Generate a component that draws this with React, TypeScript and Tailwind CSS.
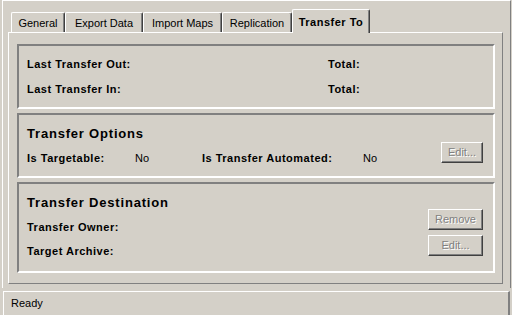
import React from 'react';

const tabs = [
  { label: 'General', w: 'w-[54px]' },
  { label: 'Export Data', w: 'w-[78px]' },
  { label: 'Import Maps', w: 'w-[79px]' },
  { label: 'Replication', w: 'w-[70px]' },
];

const Button = ({ label, className }: { label: string; className: string }) => (
  <div
    className={`${className} h-[21px] flex items-center justify-center border-t border-l border-t-white border-l-white border-r border-b border-r-[#404040] border-b-[#404040] shadow-[inset_-1px_-1px_0_#808080] text-[#808080] [text-shadow:1px_1px_0_#ffffff]`}
  >
    {label}
  </div>
);

const GroupBox = ({ className, children }: { className: string; children: React.ReactNode }) => (
  <div
    className={`${className} w-[478px] border-2 border-t-[#808080] border-l-[#808080] border-b-white border-r-white`}
  >
    {children}
  </div>
);

const App = () => {
  return (
    <div className="w-[512px] h-[315px] bg-[#d4d0c8] overflow-hidden font-['Liberation_Sans',Arial,sans-serif] text-[11px] leading-[13px] text-black">
      {/* form frame */}
      <div className="ml-[2px] w-[509px] h-[288px] border-t border-l border-white border-r border-r-[#808080] pl-[5px]">
        {/* tab strip */}
        <div className="relative z-10 h-[31px] flex items-end pl-[3px]">
          {tabs.map((t) => (
            <div
              key={t.label}
              className={`${t.w} h-[20px] flex items-center justify-center pt-[1px] border-t border-l border-white border-r border-r-[#404040] shadow-[inset_-1px_0_0_#808080] rounded-t-[2px]`}
            >
              {t.label}
            </div>
          ))}
          <div className="w-[78px] h-[24px] -mb-px bg-[#d4d0c8] flex items-start pt-[6px] justify-center font-bold tracking-[0.5px] border-t border-l border-white border-r border-r-[#404040] shadow-[inset_-1px_0_0_#808080] rounded-t-[2px]">
            Transfer To
          </div>
        </div>

        {/* tab page */}
        <div className="w-[495px] h-[252px] border-t border-l border-white border-r border-b border-r-[#808080] border-b-[#808080] pl-[8px] pt-[11px]">
          <GroupBox className="h-[65px] pl-[8px] pt-[6px] font-bold tracking-[0.5px]">
            <div className="h-[25px] flex items-center">
              <span className="w-[301px]">Last Transfer Out:</span>
              <span>Total:</span>
            </div>
            <div className="h-[25px] flex items-center">
              <span className="w-[301px]">Last Transfer In:</span>
              <span>Total:</span>
            </div>
          </GroupBox>

          <GroupBox className="h-[65px] mt-[4px] pl-[8px] pr-[10px] pt-[9px] relative">
            <div className="h-[18px] flex items-center text-[13px] font-bold tracking-[0.8px]">Transfer Options</div>
            <div className="h-[22px] flex items-center">
              <span className="w-[108px] font-bold tracking-[0.5px] mt-[10px]">Is Targetable:</span>
              <span className="w-[67px] mt-[10px]">No</span>
              <span className="w-[161px] font-bold tracking-[0.5px] mt-[10px]">Is Transfer Automated:</span>
              <span className="mt-[10px]">No</span>
              <Button label="Edit..." className="ml-auto w-[42px] -mt-[1px]" />
            </div>
          </GroupBox>

          <GroupBox className="h-[91px] mt-[4px] pl-[8px] pr-[10px] flex">
            <div className="flex-1 pt-[9px]">
              <div className="h-[18px] flex items-center text-[13px] font-bold tracking-[0.8px]">Transfer Destination</div>
              <div className="mt-[4px] h-[24px] flex items-center font-bold tracking-[0.5px]">Transfer Owner:</div>
              <div className="h-[24px] flex items-center font-bold tracking-[0.5px]">Target Archive:</div>
            </div>
            <div className="pt-[25px] flex flex-col gap-[5px]">
              <Button label="Remove" className="w-[55px]" />
              <Button label="Edit..." className="w-[55px]" />
            </div>
          </GroupBox>
        </div>
      </div>

      {/* status bar */}
      <div className="mt-[3px] ml-[3px] w-[507px] h-[24px] border-t border-l border-white border-r-2 border-r-[#808080] pl-[7px] pt-[5px]">
        Ready
      </div>
    </div>
  );
};

export default App;
